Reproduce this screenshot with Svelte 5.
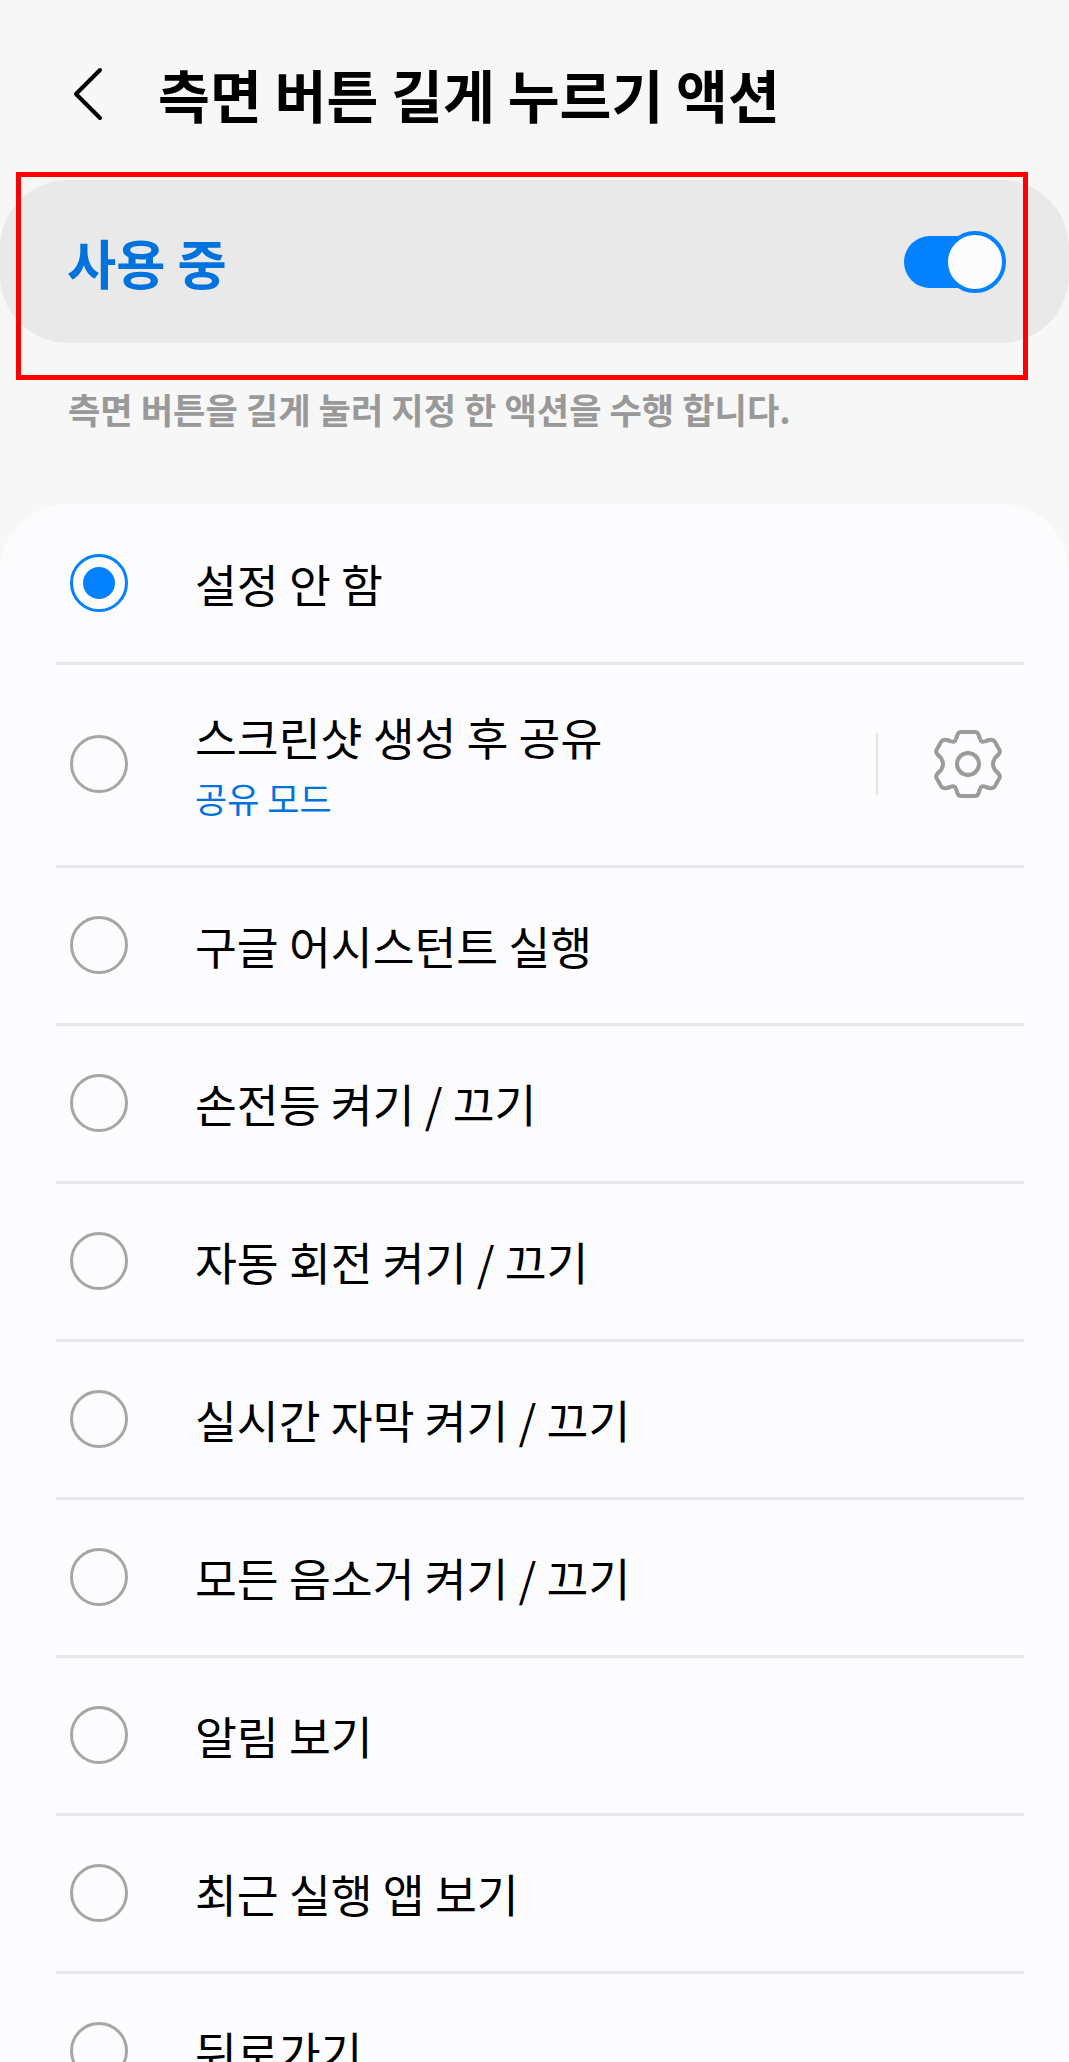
<script lang="ts">
    const options = [
        { label: '설정 안 함', selected: true },
        { label: '스크린샷 생성 후 공유', sub: '공유 모드', settings: true },
        { label: '구글 어시스턴트 실행' },
        { label: '손전등 켜기 / 끄기' },
        { label: '자동 회전 켜기 / 끄기' },
        { label: '실시간 자막 켜기 / 끄기' },
        { label: '모든 음소거 켜기 / 끄기' },
        { label: '알림 보기' },
        { label: '최근 실행 앱 보기' },
        { label: '뒤로가기' }
    ];
</script>

<div class="page">
    <header class="topbar">
        <svg class="back" width="30" height="54" viewBox="0 0 30 54" aria-label="뒤로">
            <path d="M27 3 L3 27 L27 51" />
        </svg>
        <h1>측면 버튼 길게 누르기 액션</h1>
    </header>

    <section class="status">
        <span class="status-label">사용 중</span>
        <span class="toggle"><span class="thumb"></span></span>
    </section>
    <div class="highlight"></div>

    <p class="description">측면 버튼을 길게 눌러 지정 한 액션을 수행 합니다.</p>

    <ul class="list">
        {#each options as option, i}
            <li class="row" class:first={i === 0} class:tall={option.sub}>
                <span class="radio" class:on={option.selected}></span>
                <div class="texts">
                    <span class="label">{option.label}</span>
                    {#if option.sub}
                        <span class="sub">{option.sub}</span>
                    {/if}
                </div>
                {#if option.settings}
                    <span class="vline"></span>
                    <svg class="gear" width="70" height="72" viewBox="-35 -36 70 72" aria-label="설정">
                        <path d="M-7 -32 H7 Q10 -32 11 -28 L12 -25 Q13 -21 18 -23 L21 -24 Q25 -25 27 -22 L31 -15 Q33 -12 30 -9 L27 -6 Q23 0 27 6 L30 9 Q33 12 31 15 L27 22 Q25 25 21 24 L18 23 Q13 21 12 25 L11 28 Q10 32 7 32 H-7 Q-10 32 -11 28 L-12 25 Q-13 21 -18 23 L-21 24 Q-25 25 -27 22 L-31 15 Q-33 12 -30 9 L-27 6 Q-23 0 -27 -6 L-30 -9 Q-33 -12 -31 -15 L-27 -22 Q-25 -25 -21 -24 L-18 -23 Q-13 -21 -12 -25 L-11 -28 Q-10 -32 -7 -32 Z" />
                        <circle cx="0" cy="0" r="11" />
                    </svg>
                {/if}
            </li>
        {/each}
    </ul>
</div>

<style>
    :global(body) {
        margin: 0;
        background-color: #f7f7f7;
    }

    .page {
        position: relative;
        height: 2062px;
        overflow: hidden;
        background-color: #f7f7f7;
        font-family: 'Noto Sans CJK KR', 'Noto Sans', sans-serif;
        color: #000;
    }

    .topbar {
        box-sizing: border-box;
        height: 180px;
        padding: 8px 0 0 73px;
        display: flex;
        align-items: center;
    }

    .back {
        flex: none;
        margin-right: 55px;
    }

    .back path {
        fill: none;
        stroke: #000;
        stroke-width: 4;
        stroke-linecap: round;
        stroke-linejoin: round;
    }

    h1 {
        margin: 0;
        font-size: 56.4px;
        font-weight: 700;
        line-height: 64px;
        white-space: nowrap;
    }

    .status {
        box-sizing: border-box;
        height: 163px;
        padding: 0 67px 0 67px;
        display: flex;
        align-items: center;
        justify-content: space-between;
        background-color: #e9e9e9;
        border-radius: 68px;
    }

    .status-label {
        font-size: 53.5px;
        font-weight: 700;
        color: #0072de;
        line-height: 64px;
    }

    .toggle {
        position: relative;
        display: block;
        width: 98px;
        height: 52px;
        border-radius: 26px;
        background-color: #0381fe;
    }

    .thumb {
        position: absolute;
        right: -4px;
        top: -5px;
        box-sizing: border-box;
        width: 62px;
        height: 62px;
        border-radius: 50%;
        background-color: #fcfcfc;
        border: 4px solid #0381fe;
    }

    /* red annotation drawn over the screenshot */
    .highlight {
        position: absolute;
        left: 16px;
        top: 172px;
        box-sizing: border-box;
        width: 1012px;
        height: 208px;
        border: 5px solid #ff0000;
    }

    .description {
        box-sizing: border-box;
        height: 161px;
        margin: 0;
        padding: 43px 0 0 68px;
        font-size: 35.2px;
        font-weight: 700;
        line-height: 46px;
        color: #999999;
        white-space: nowrap;
    }

    .list {
        margin: 0;
        padding: 0;
        list-style: none;
        background-color: #fcfcff;
        border-radius: 68px 68px 0 0;
    }

    .row {
        position: relative;
        box-sizing: border-box;
        height: 158px;
        padding: 0 66px 4px 70px;
        display: flex;
        align-items: center;
    }

    .row.first {
        height: 161px;
    }

    .row.tall {
        height: 203px;
        padding-bottom: 6px;
    }

    /* divider inset from the row edges */
    .row::after {
        content: '';
        position: absolute;
        left: 56px;
        right: 45px;
        bottom: 0;
        height: 3px;
        background-color: #e8e8ea;
    }

    .radio {
        flex: none;
        box-sizing: border-box;
        width: 58px;
        height: 58px;
        margin-right: 67px;
        border-radius: 50%;
        border: 3px solid #a6a6a6;
        display: flex;
        align-items: center;
        justify-content: center;
    }

    .radio.on {
        border-color: #0381fe;
    }

    .radio.on::before {
        content: '';
        width: 32px;
        height: 32px;
        border-radius: 50%;
        background-color: #0381fe;
    }

    .texts {
        flex: 1;
        display: flex;
        flex-direction: column;
    }

    .label {
        font-size: 45.5px;
        line-height: 56px;
        white-space: nowrap;
    }

    .sub {
        margin-top: 12px;
        font-size: 35px;
        line-height: 44px;
        color: #0072de;
    }

    .vline {
        flex: none;
        width: 2px;
        height: 62px;
        background-color: #e4e4e4;
        margin-right: 55px;
    }

    .gear {
        flex: none;
    }

    .gear path,
    .gear circle {
        fill: none;
        stroke: #9b9b9b;
        stroke-width: 4;
        stroke-linejoin: round;
    }
</style>
